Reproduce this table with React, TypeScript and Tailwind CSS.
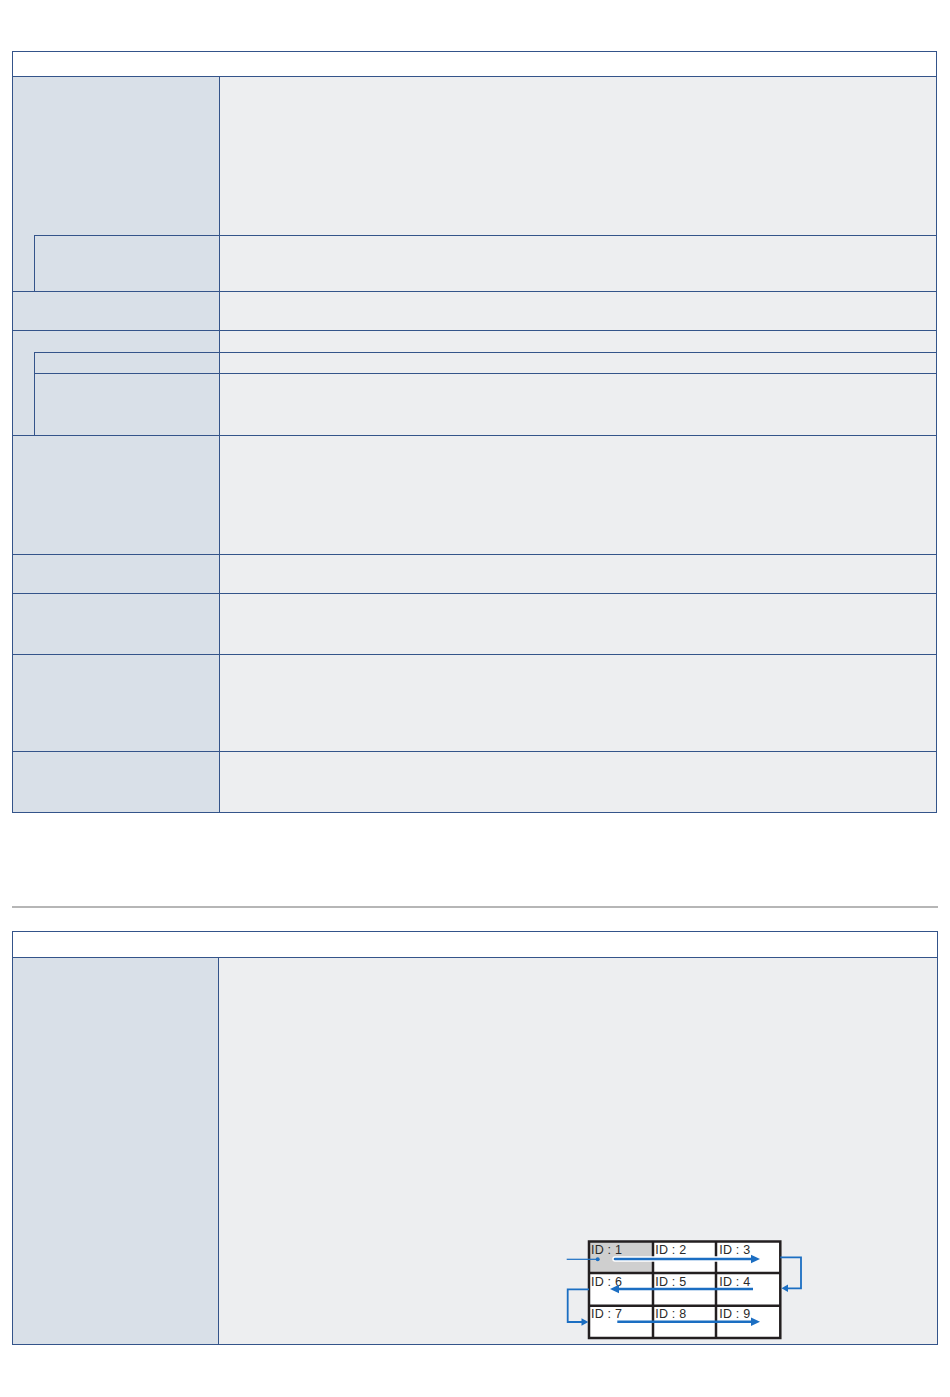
import React from "react";

const L = "bg-[#d9e0e8]";
const R = "bg-[#edeef0]";

function Row({ h, last }: { h: string; last?: boolean }) {
  return (
    <div className={`flex ${h} ${last ? "" : "border-b border-[#34548a]"}`}>
      <div className={`w-[207px] shrink-0 border-r border-[#34548a] ${L}`} />
      <div className={`flex-1 ${R}`} />
    </div>
  );
}

function SubRow({ h }: { h: string }) {
  return (
    <div className={`flex ${h} border-t border-[#34548a]`}>
      <div className={`w-[185px] shrink-0 border-r border-[#34548a] ${L}`} />
      <div className={`flex-1 ${R}`} />
    </div>
  );
}

function Diagram() {
  const blue = "#1b6ec2";
  const ink = "#231f20";
  const txt = {
    fontFamily: '"Liberation Sans", Arial, sans-serif',
    fontSize: 12.5,
    letterSpacing: 0.2,
    fill: "#2a2a2a",
  } as React.CSSProperties;
  const rows = [
    ["ID : 1", "ID : 2", "ID : 3"],
    ["ID : 6", "ID : 5", "ID : 4"],
    ["ID : 7", "ID : 8", "ID : 9"],
  ];
  const bx = [31, 95.3, 159.3];
  const by = [17.8, 49.8, 82.3];
  return (
    <svg width="250" height="106" viewBox="0 0 250 106">
      <rect x="29" y="5.5" width="191.3" height="96.5" fill="#ffffff" />
      <rect x="29" y="5.5" width="64" height="31.5" fill="#cfcfcf" />
      {rows.map((r, i) =>
        r.map((t, j) => (
          <text key={`${i}-${j}`} x={bx[j]} y={by[i]} style={txt}>
            {t}
          </text>
        ))
      )}
      <g stroke={ink} strokeWidth="2.5" fill="none">
        <rect x="29" y="5.5" width="191.3" height="96.5" />
        <line x1="29" y1="37" x2="220.3" y2="37" />
        <line x1="29" y1="69.8" x2="220.3" y2="69.8" />
        <line x1="93" y1="5.5" x2="93" y2="102" />
        <line x1="156" y1="5.5" x2="156" y2="102" />
      </g>
      <line x1="6.7" y1="23.3" x2="37.5" y2="23.3" stroke={blue} strokeWidth="1.2" />
      <circle cx="37.7" cy="23.3" r="2" fill={blue} />
      <line x1="55" y1="23" x2="192" y2="23" stroke="#ffffff" strokeWidth="5.5" strokeLinecap="round" />
      <line x1="55" y1="23" x2="193" y2="23" stroke={blue} strokeWidth="2.6" strokeLinecap="round" />
      <polygon points="191,18.8 200,23 191,27.2" fill={blue} />
      <polyline points="220.3,21.3 241,21.3 241,52.3 227,52.3" stroke={blue} strokeWidth="1.8" fill="none" />
      <polygon points="228,48.6 221.5,52.3 228,56" fill={blue} />
      <line x1="193" y1="53" x2="58" y2="53" stroke={blue} strokeWidth="2.6" />
      <polygon points="59,48.8 50,53 59,57.2" fill={blue} />
      <polyline points="29,53.3 7.7,53.3 7.7,86 22,86" stroke={blue} strokeWidth="1.8" fill="none" />
      <polygon points="21.5,82.3 28.3,86 21.5,89.7" fill={blue} />
      <line x1="57.3" y1="85.7" x2="193" y2="85.7" stroke={blue} strokeWidth="2.6" />
      <polygon points="191,81.5 200,85.7 191,89.9" fill={blue} />
    </svg>
  );
}

export default function App() {
  return (
    <div className="w-[950px] min-h-[1397px] bg-white pt-[51px] pl-[12px]">
      <div className="w-[925px] border border-[#34548a]">
        <div className="h-[25px] border-b border-[#34548a] bg-white" />
        <div className="border-b border-[#34548a]">
          <Row h="h-[158px]" last />
          <div className={`flex ${L} pl-[21px]`}>
            <div className="flex-1 flex flex-col border-l border-[#34548a]">
              <SubRow h="h-[56px]" />
            </div>
          </div>
        </div>
        <Row h="h-[39px]" />
        <div className="border-b border-[#34548a]">
          <Row h="h-[21px]" last />
          <div className={`flex ${L} pl-[21px]`}>
            <div className="flex-1 flex flex-col border-l border-[#34548a]">
              <SubRow h="h-[21px]" />
              <SubRow h="h-[62px]" />
            </div>
          </div>
        </div>
        <Row h="h-[119px]" />
        <Row h="h-[39px]" />
        <Row h="h-[61px]" />
        <Row h="h-[97px]" />
        <Row h="h-[60px]" last />
      </div>

      <div className="mt-[93px] h-[2px] w-[926px] bg-[#b6b6b6]" />

      <div className="mt-[23px] w-[926px] border border-[#34548a]">
        <div className="h-[26px] border-b border-[#34548a] bg-white" />
        <div className="flex h-[386px]">
          <div className={`w-[206px] shrink-0 border-r border-[#34548a] ${L}`} />
          <div className={`flex-1 ${R} pl-[341px] pt-[278px]`}>
            <Diagram />
          </div>
        </div>
      </div>
    </div>
  );
}
